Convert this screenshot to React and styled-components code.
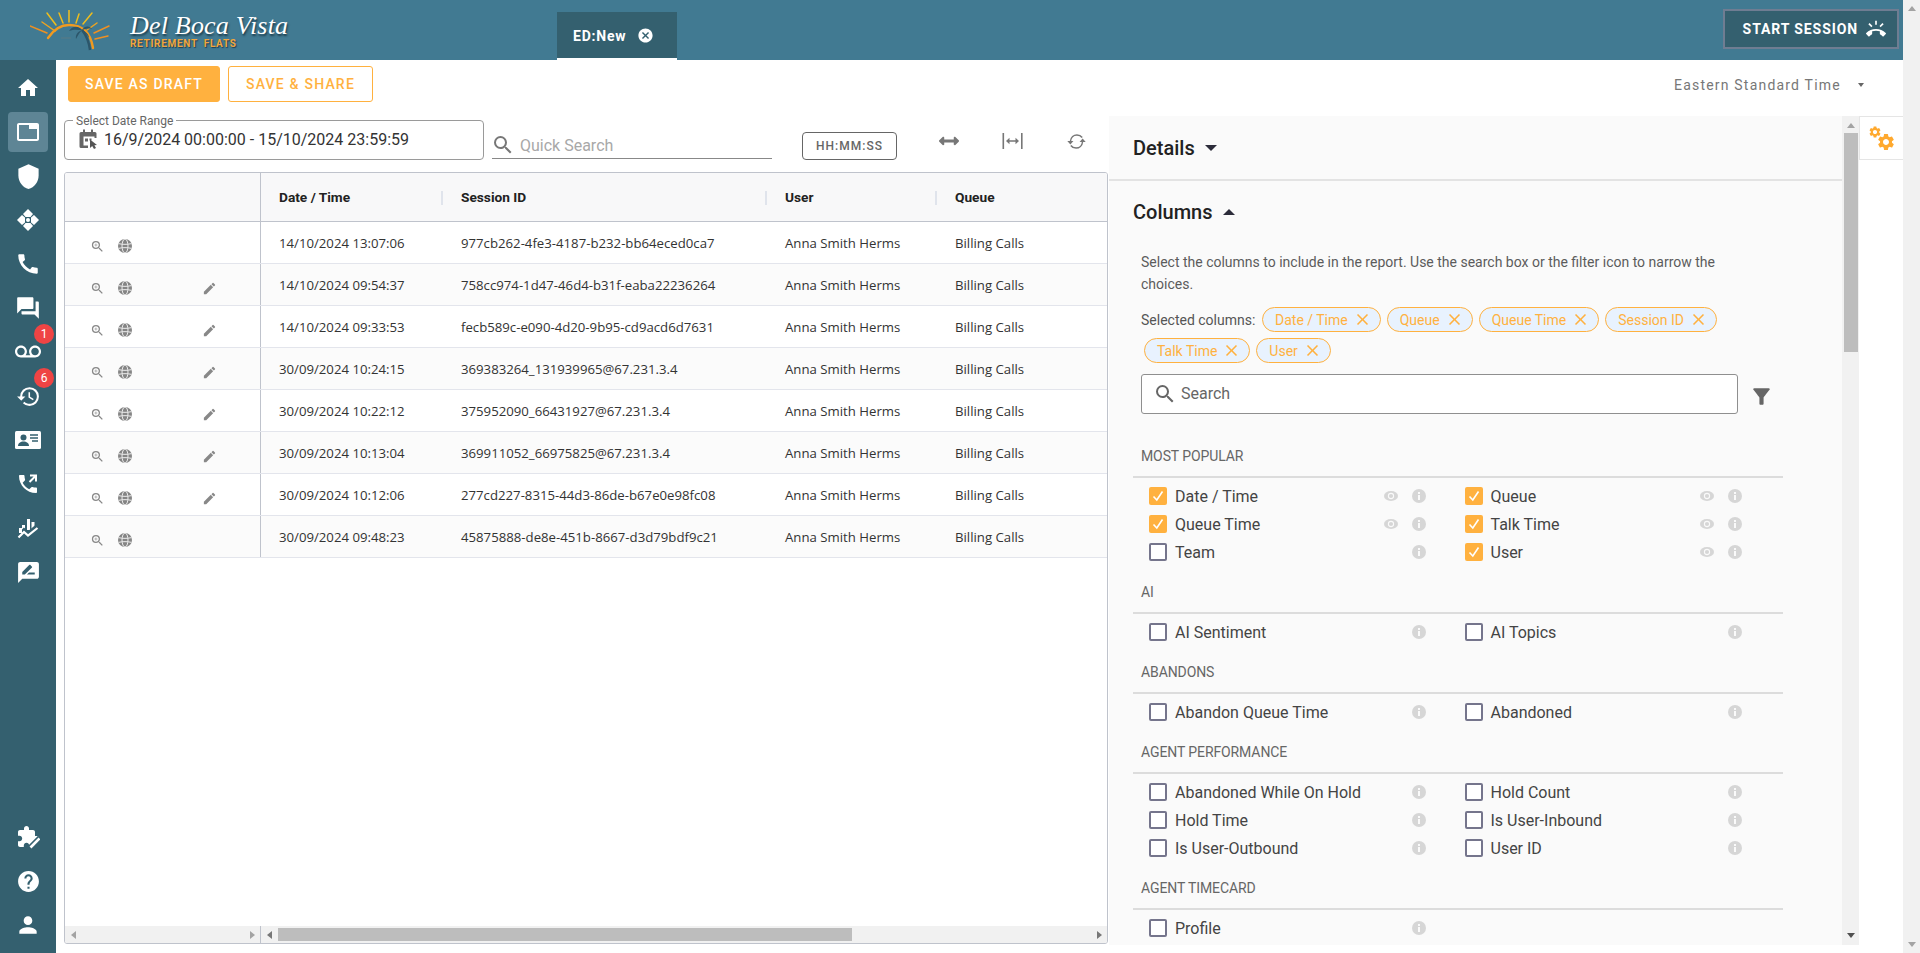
import React from 'react';
import styled, { createGlobalStyle } from 'styled-components';
import {
  MdHome, MdTab, MdShield, MdCall, MdForum, MdVoicemail, MdRestore, MdRateReview, MdHelp, MdPerson,
  MdZoomIn, MdEdit, MdSearch, MdFilterAlt, MdCancel, MdRingVolume, MdClose, MdSettings,
} from 'react-icons/md';
import { FaArrowsAltH } from 'react-icons/fa';

const Global = createGlobalStyle`
  html, body { margin: 0; padding: 0; height: 100%; overflow: hidden; background: #fff; }
  * { box-sizing: border-box; }
  body { font-family: Roboto, "Liberation Sans", sans-serif; color: #333; }
`;

const Page = styled.div`display: flex; width: 1920px; height: 953px; overflow: hidden;`;
const Main = styled.div`width: 1903px; display: flex; flex-direction: column;`;
const PageBar = styled.div`
  width: 17px; background: #f1f1f1; display: flex; flex-direction: column; align-items: center;
  justify-content: space-between; padding: 6px 0 6px;
`;
const Arrow = styled.span`
  display: block; width: 0; height: 0; flex: none;
  ${p => p.$dir === 'up' && `border-left:4px solid transparent;border-right:4px solid transparent;border-bottom:5px solid ${p.$c};`}
  ${p => p.$dir === 'down' && `border-left:4px solid transparent;border-right:4px solid transparent;border-top:5px solid ${p.$c};`}
  ${p => p.$dir === 'left' && `border-top:4px solid transparent;border-bottom:4px solid transparent;border-right:5px solid ${p.$c};`}
  ${p => p.$dir === 'right' && `border-top:4px solid transparent;border-bottom:4px solid transparent;border-left:5px solid ${p.$c};`}
`;

/* header */
const Header = styled.header`
  height: 60px; flex: none; background: #417a92; display: flex; align-items: flex-start; position: relative;
`;
const Logo = styled.div`display: flex; width: 557px; height: 60px; padding: 10px 0 0 30px;`;
const LogoText = styled.div`margin-left: 18px; display: flex; flex-direction: column;`;
const LogoScript = styled.div`
  font-family: "Liberation Serif", serif; font-style: italic; font-size: 26px; line-height: 28px; margin-top: 2px;
  color: #fff; letter-spacing: .2px; text-shadow: 1px 2px 2px #1d3d4c; white-space: nowrap; font-weight: 400;
`;
const LogoSub = styled.div`
  font-family: Roboto, sans-serif; font-size: 10px; line-height: 10px; font-weight: 700;
  color: #f0a63e; letter-spacing: .7px; word-spacing: 3px; text-shadow: 1px 1px 1px #1d3d4c; white-space: nowrap; margin-top: -1px;
`;
const Tab = styled.div`
  margin-top: 12px; width: 120px; height: 48px; background: #34606f; border-bottom: 2px solid #fff;
  display: flex; align-items: center; padding: 1px 0 0 16px; gap: 11px; color: #fff;
  font-weight: 700; font-size: 14px; letter-spacing: .8px;
`;
const StartBtn = styled.button`
  margin: 9px 4px 0 auto; width: 176px; height: 40px; background: #34606f; border: 2px solid #6f7d92;
  color: #fff; font: 700 14px Roboto, sans-serif; letter-spacing: .9px; display: flex; align-items: center;
  justify-content: flex-end; gap: 8px; padding: 0 11px 0 0;
`;

const Body = styled.div`flex: 1; display: flex; min-height: 0;`;

/* sidebar */
const Sidebar = styled.nav`
  width: 56px; flex: none; background: #34606f; display: flex; flex-direction: column; align-items: center; padding: 6px 0;
`;
const NavItem = styled.div`
  width: 40px; height: 40px; margin: 2px 0; border-radius: 4px; display: flex; align-items: center; justify-content: center;
  color: #fff; position: relative; background: ${p => (p.$active ? '#5e8595' : 'transparent')};
`;
const NavBottom = styled.div`margin-top: auto; display: flex; flex-direction: column;`;
const Badge = styled.span`
  position: absolute; top: -8px; left: 26px; width: 20px; height: 20px; border-radius: 50%; background: #ef4444;
  color: #fff; font-size: 12px; display: flex; align-items: center; justify-content: center;
`;

/* content */
const Content = styled.div`flex: 1; display: flex; flex-direction: column; min-width: 0;`;
const ActionBar = styled.div`height: 56px; flex: none; display: flex; align-items: flex-start; padding: 6px 0 0 12px; gap: 8px;`;
const Btn = styled.button`
  height: 36px; border-radius: 3px; border: 1px solid #ffb13f; font: 500 14px Roboto, sans-serif; letter-spacing: 1.2px;
  width: ${p => p.$w}px; padding: 0; color: ${p => (p.$solid ? '#fff' : '#ffb13f')}; background: ${p => (p.$solid ? '#ffb13f' : '#fff')};
`;
const TimeZone = styled.div`
  margin-left: auto; display: flex; align-items: center; height: 36px; padding-top: 1px; font-size: 14px; letter-spacing: 1.2px; color: #777; width: 229px;
`;
const SmallCaret = styled.span`
  margin-left: 17px; width: 0; height: 0; border-left: 3.5px solid transparent; border-right: 3.5px solid transparent; border-top: 4px solid #666;
`;
const Workspace = styled.div`height: 829px; flex: none; display: flex;`;
const LeftPane = styled.div`width: 1053px; flex: none; padding: 4px 0 0 8px; display: flex; flex-direction: column;`;
const Toolbar = styled.div`height: 52px; flex: none; display: flex; align-items: flex-start;`;
const DateField = styled.div`
  width: 420px; height: 40px; border: 1px solid #9a9a9a; border-radius: 4px; display: flex; align-items: center;
  padding: 0 0 2px 14px; gap: 5px; position: relative; font-size: 16px; color: #333;
`;
const FieldLabel = styled.span`
  position: absolute; left: 8px; top: -7px; background: #fff; padding: 0 3px; font-size: 12px; line-height: 14px; color: #666;
`;
const QuickSearch = styled.div`
  margin: 12px 0 0 8px; width: 280px; height: 27px; border-bottom: 1px solid #888; display: flex; align-items: center;
  gap: 5px; font-size: 16px; color: #a8a8a8;
  svg { margin-left: -1px; }
`;
const FormatBtn = styled.button`
  margin: 12px 0 0 30px; width: 95px; height: 28px; border: 1px solid #666; border-radius: 4px; background: #fff;
  font: 500 12px Roboto, sans-serif; letter-spacing: 1px; color: #666; padding: 0;
`;
const ToolIcons = styled.div`margin: 11px 0 0 41px; display: flex; gap: 43px; align-items: center; height: 20px; color: #777;`;
const ToolIcon = styled.span`width: 21px; display: flex; justify-content: center; align-items: center;`;

/* grid */
const Grid = styled.div`
  width: 1044px; height: 772px; border: 1px solid #bfc3cc; border-radius: 3px; display: flex; flex-direction: column; overflow: hidden;
  font-family: "Open Sans", sans-serif; font-size: 13.2px; color: #333;
`;
const Cols = '195px 1px 182px 324px 170px 171px';
const GridHead = styled.div`
  height: 49px; flex: none; background: #f8f8f9; border-bottom: 1px solid #bfc3cc; display: grid; grid-template-columns: ${Cols}; align-items: center;
  font-family: Roboto, sans-serif; font-weight: 700; color: #222;
`;
const HeadCell = styled.div`
  height: 100%; display: flex; align-items: center; padding-left: 18px; position: relative; font-size: 13.7px;
  &::after {
    content: ''; display: ${p => (p.$sep ? 'block' : 'none')}; position: absolute; right: 0; top: 18px; width: 2px; height: 14px; background: #e0e4ec;
  }
`;
const VDivider = styled.div`background: #bfc3cc; height: 100%;`;
const GridBody = styled.div`flex: 1; min-height: 0;`;
const Row = styled.div`
  height: 42px; display: grid; grid-template-columns: ${Cols}; align-items: center; border-bottom: 1px solid #e3e5ec;
  background: ${p => (p.$alt ? '#fbfbfb' : '#fff')};
`;
const ActionCell = styled.div`
  height: 100%; display: flex; padding: 7px 0 0 25px; align-items: center; color: #888;
`;
const ActionSlot = styled.span`display: flex; width: ${p => p.$w}px; flex: none;`;
const Cell = styled.div`padding: 0 0 0 18px; white-space: nowrap; overflow: hidden; line-height: 18px;`;
const HBar = styled.div`height: 17px; flex: none; display: grid; grid-template-columns: 195px 1px 1fr; background: #f1f1f1;`;
const HSeg = styled.div`display: flex; align-items: center; padding: 0 5px 0 6px; justify-content: space-between; position: relative;`;
const HThumb = styled.span`position: absolute; left: 17px; top: 2px; width: 574px; height: 13px; background: #bdbdbd;`;

/* panel */
const Panel = styled.div`width: 733px; flex: none; background: #fafafa; overflow: hidden;`;
const SectionHead = styled.div`
  height: ${p => p.$h}px; display: flex; align-items: center; padding-left: 24px; font-size: 20px; font-weight: 500; color: #222; gap: 10px;
  border-bottom: ${p => (p.$line ? '2px solid #e3e3e3' : '0')};
`;
const Caret = styled.span`
  width: 0; height: 0; border-left: 6px solid transparent; border-right: 6px solid transparent;
  ${p => (p.$up ? 'border-bottom: 6px solid #2c2c3a; margin-left: 1px;' : 'border-top: 6px solid #2c2c3a;')}
`;
const Desc = styled.p`margin: 8px 0 0 32px; width: 610px; font-size: 14px; line-height: 22px; color: #5c5c5c;`;
const ChipWrap = styled.div`
  margin: 12px 0 0 32px; width: 680px; display: flex; flex-wrap: wrap; row-gap: 6px; align-items: center;
`;
const ChipLabel = styled.span`width: 118px; font-size: 14px; color: #555; white-space: nowrap;`;
const Chip = styled.span`
  height: 25px; margin: 0 3px; padding: 0 8px 0 12px; border: 1px solid #ffb13f; border-radius: 13px; background: #e8f2fe; color: #ffb13f;
  font-size: 14px; display: flex; align-items: center; gap: 5px; white-space: nowrap;
`;
const SearchRow = styled.div`margin: 11px 0 0 32px; display: flex; align-items: center; height: 40px;`;
const SearchBox = styled.div`
  width: 597px; height: 40px; border: 1px solid #8f8f8f; border-radius: 3px; background: #fff; display: flex; align-items: center;
  padding: 0 0 1px 11px; gap: 4px; color: #666; font-size: 16px;
`;
const FilterWrap = styled.span`margin: 4px 0 0 11px; display: flex; color: #666;`;
const Categories = styled.div`margin: 32px 0 0 24px; width: 650px;`;
const Category = styled.section`margin-bottom: 16px;`;
const CatHead = styled.div`
  height: 32px; border-bottom: 2px solid #dcdcdc; padding-left: 8px; font-size: 14px; line-height: 20px; color: #666; letter-spacing: -.1px;
`;
const CatItems = styled.div`padding: 4px 0 0 16px; display: grid; grid-template-columns: 315.5px 315.5px; grid-auto-rows: 28px;`;
const Item = styled.div`display: grid; grid-template-columns: 26px 209px 28px 28px; align-items: center; font-size: 16px; color: #444;`;
const Check = styled.span`
  width: 18px; height: 18px; border-radius: 2px; display: flex; align-items: center; justify-content: center;
  ${p => (p.$on ? 'background: #ffb13f;' : 'background: #fff; border: 2px solid #75758c;')}
`;
const ItemLabel = styled.span`white-space: nowrap;`;
const Dot = styled.span`display: flex; grid-column: ${p => p.$col};`;
const VBar = styled.div`
  width: 17px; flex: none; background: #f1f1f1; display: flex; flex-direction: column; align-items: center; padding: 7px 0 7px;
`;
const VThumb = styled.div`width: 14px; height: 219px; background: #bdbdbd; margin-top: 5px;`;
const VSpacer = styled.div`flex: 1;`;
const SideTabs = styled.div`width: 44px; flex: none;`;
const SideTab = styled.div`
  width: 44px; height: 44px; background: #fff; border: 1px solid #e5e5e5; border-right: 0; display: flex; align-items: center; justify-content: center;
`;

/* drawings */
const SunLogo = () => (
  <svg width="82" height="42" viewBox="0 0 82 42" style={{ flex: 'none' }}>
    <g stroke="#ee9022" strokeWidth="1.5" strokeLinecap="round" fill="none">
      <path d="M17 3L26 15" stroke="#eebd1d" />
      <path d="M29 3L33 13" stroke="#eebd1d" />
      <path d="M39 0V12" stroke="#f3c01c" />
      <path d="M49 4L46 13" stroke="#eebd1d" />
      <path d="M62 3L53 14" stroke="#eebd1d" />
      <path d="M0 16L17 23" />
      <path d="M12 12L25 21" stroke="#efa420" />
      <path d="M67 13L57 20" stroke="#efa420" />
      <path d="M79 16L64 23" />
      <path d="M78 26L65 29" />
      <path d="M18 28C24 19 31 15 39 15C50 15 60 19 63 38" strokeWidth="2.4" stroke="#f09a20" />
    </g>
    <path d="M60 40C59 32 56 25 52 20" stroke="#2c566a" strokeWidth="2.4" fill="none" />
    <path d="M52 20C48 15 42 16 39 21C44 19 48 20 52 20ZM52 20C55 15 60 16 62 19C58 18 55 19 52 20ZM52 20C49 21 45 24 46 29C48 25 50 22 52 20ZM52 20C55 21 59 24 59 28C57 25 55 22 52 20Z" fill="#2c566a" />
    <path d="M31 28h10" stroke="#5b7a85" strokeWidth="1" />
  </svg>
);
const Diamond = () => (
  <svg width="24" height="24" viewBox="0 0 24 24" fill="#fff">
    <path d="M12 1L17 6L14.5 9H9.5L7 6Z" />
    <path d="M12 23L17 18L14.5 15H9.5L7 18Z" />
    <path d="M1 12L6 7L9 9.5V14.5L6 17Z" />
    <path d="M23 12L18 7L15 9.5V14.5L18 17Z" />
    <circle cx="12" cy="12" r="2" />
  </svg>
);
const ContactCard = () => (
  <svg width="26" height="18" viewBox="0 0 26 18">
    <rect width="26" height="18" rx="1.5" fill="#fff" />
    <circle cx="8.5" cy="6.5" r="3" fill="#34606f" />
    <path d="M3 15c0-3 2.5-4.5 5.5-4.5S14 12 14 15z" fill="#34606f" />
    <path d="M15 4h8M15 7h8M17 10h6" stroke="#34606f" strokeWidth="1.3" />
  </svg>
);
const CallOut = () => (
  <svg width="24" height="24" viewBox="0 0 24 24" fill="#fff">
    <path d="M20 15.5c-1.25 0-2.45-.2-3.57-.57-.35-.11-.74-.03-1.02.24l-2.2 2.2c-2.83-1.44-5.15-3.75-6.59-6.59l2.2-2.21c.28-.26.36-.65.25-1C8.7 6.45 8.5 5.25 8.5 4c0-.55-.45-1-1-1H4c-.55 0-1 .45-1 1 0 9.39 7.61 17 17 17 .55 0 1-.45 1-1v-3.5c0-.55-.45-1-1-1z" />
    <path d="M14 2.5v2h3.6l-4.8 4.8 1.4 1.4L19 5.9v3.6h2v-7z" />
  </svg>
);
const ChartIcon = () => (
  <svg width="24" height="24" viewBox="0 0 24 24" fill="#fff">
    <rect x="6" y="9" width="3" height="7" />
    <rect x="11" y="3" width="3" height="11" />
    <rect x="15.5" y="6" width="3" height="8" />
    <path d="M2 21L8 15L12 18.5L21 11" fill="none" stroke="#34606f" strokeWidth="5" />
    <path d="M2.5 21.5L8 16L12 19.5L21.5 12" fill="none" stroke="#fff" strokeWidth="2.2" />
    <rect x="3" y="12" width="3" height="5" />
  </svg>
);
const PuzzlePen = () => (
  <svg width="24" height="24" viewBox="0 0 24 24" fill="#fff">
    <path d="M20.5 11H19V7c0-1.1-.9-2-2-2h-4V3.5C13 2.12 11.88 1 10.5 1S8 2.12 8 3.5V5H4c-1.1 0-1.99.9-1.99 2v3.8H3.5c1.49 0 2.7 1.21 2.7 2.7s-1.21 2.7-2.7 2.7H2V20c0 1.1.9 2 2 2h3.8v-1.5c0-1.49 1.21-2.7 2.7-2.7 1.49 0 2.7 1.21 2.7 2.7V22H17c1.1 0 2-.9 2-2v-4h1.5c1.38 0 2.5-1.12 2.5-2.5S21.88 11 20.5 11z" />
    <path d="M13 24L24 13" stroke="#34606f" strokeWidth="6" />
    <path d="M14.5 22.5L23.5 13.5" stroke="#fff" strokeWidth="2.6" />
  </svg>
);
const Globe = () => (
  <svg width="14" height="14" viewBox="0 0 14 14" fill="none" stroke="#eee" strokeWidth="1">
    <circle cx="7" cy="7" r="7" fill="#858585" stroke="none" />
    <ellipse cx="7" cy="7" rx="3" ry="7" />
    <path d="M.5 4.6C4 5.6 10 5.6 13.5 4.6M.5 9.4C4 8.4 10 8.4 13.5 9.4" />
  </svg>
);
const CalendarCursor = () => (
  <svg width="20" height="20" viewBox="0 0 20 20">
    <path d="M2 3h14a1.5 1.5 0 0 1 1.5 1.5V9h-2V7.5h-11v9H9V19H2a1.5 1.5 0 0 1-1.5-1.5v-13A1.5 1.5 0 0 1 2 3z" fill="#666" />
    <rect x="4" y="0.5" width="2" height="4" fill="#666" />
    <rect x="12" y="0.5" width="2" height="4" fill="#666" />
    <rect x="6" y="9.5" width="3" height="3" fill="#666" />
    <rect x="10.5" y="9.5" width="2" height="2" fill="#666" />
    <path d="M11 10.5L11 19L13.2 17L15 20L17 19L15.4 16.2L18 16Z" fill="#555" />
  </svg>
);
const FitWidth = () => (
  <svg width="21" height="16" viewBox="0 0 21 16" fill="#777">
    <rect x="0.5" width="1.6" height="16" />
    <rect x="19" width="1.6" height="16" />
    <path d="M4 8L7.5 4.8V7.2H13.5V4.8L17 8L13.5 11.2V8.8H7.5V11.2Z" />
  </svg>
);
const SyncIcon = () => (
  <svg width="25" height="21" viewBox="0 0 24 20" fill="none" stroke="#777" strokeWidth="1.7">
    <path d="M5 10C5.5 5 9 2.5 12.5 2.5C15 2.5 17 3.5 18.5 5.5" />
    <path d="M19 10C18.5 15 15 17.5 11.5 17.5C9 17.5 7 16.5 5.5 14.5" />
    <path d="M1.5 9.5H8.5L5 13.5Z" fill="#777" stroke="none" />
    <path d="M15.5 10.5H22.5L19 6.5Z" fill="#777" stroke="none" />
  </svg>
);
const Gears = () => (
  <svg width="28" height="28" viewBox="0 0 28 28" color="#ffa92e" style={{ marginTop: 2 }}>
    <MdSettings x={0} y={0} size={14} />
    <MdSettings x={8} y={7} size={20} />
  </svg>
);
const Tick = () => (
  <svg width="12" height="12" viewBox="0 0 12 12" fill="none" stroke="#fff" strokeWidth="1.6"><path d="M1.5 6.5L4.8 10L10.5 1.5" /></svg>
);
const EyeDot = () => (
  <svg width="14" height="14" viewBox="0 0 14 14">
    <ellipse cx="7" cy="7" rx="7" ry="5" fill="#d6d6d6" />
    <circle cx="7" cy="7" r="2.6" fill="none" stroke="#fafafa" strokeWidth="1.1" />
  </svg>
);
const InfoDot = () => (
  <svg width="14" height="14" viewBox="0 0 14 14">
    <circle cx="7" cy="7" r="7" fill="#d6d6d6" />
    <rect x="6" y="6" width="2" height="5" fill="#fafafa" />
    <rect x="6" y="3" width="2" height="2" fill="#fafafa" />
  </svg>
);

/* data */
const rows = [
  ['14/10/2024 13:07:06', '977cb262-4fe3-4187-b232-bb64eced0ca7', false],
  ['14/10/2024 09:54:37', '758cc974-1d47-46d4-b31f-eaba22236264', true],
  ['14/10/2024 09:33:53', 'fecb589c-e090-4d20-9b95-cd9acd6d7631', true],
  ['30/09/2024 10:24:15', '369383264_131939965@67.231.3.4', true],
  ['30/09/2024 10:22:12', '375952090_66431927@67.231.3.4', true],
  ['30/09/2024 10:13:04', '369911052_66975825@67.231.3.4', true],
  ['30/09/2024 10:12:06', '277cd227-8315-44d3-86de-b67e0e98fc08', true],
  ['30/09/2024 09:48:23', '45875888-de8e-451b-8667-d3d79bdf9c21', false],
];
const chips = ['Date / Time', 'Queue', 'Queue Time', 'Session ID', 'Talk Time', 'User'];
const categories = [
  ['MOST POPULAR', [['Date / Time', 1], ['Queue', 1], ['Queue Time', 1], ['Talk Time', 1], ['Team', 0], ['User', 1]]],
  ['AI', [['AI Sentiment', 0], ['AI Topics', 0]]],
  ['ABANDONS', [['Abandon Queue Time', 0], ['Abandoned', 0]]],
  ['AGENT PERFORMANCE', [['Abandoned While On Hold', 0], ['Hold Count', 0], ['Hold Time', 0], ['Is User-Inbound', 0], ['Is User-Outbound', 0], ['User ID', 0]]],
  ['AGENT TIMECARD', [['Profile', 0]]],
];

export default function App() {
  return (
    <Page>
      <Global />
      <Main>
        <Header>
          <Logo>
            <SunLogo />
            <LogoText>
              <LogoScript>Del Boca Vista</LogoScript>
              <LogoSub>RETIREMENT FLATS</LogoSub>
            </LogoText>
          </Logo>
          <Tab>ED:New <MdCancel size={17} /></Tab>
          <StartBtn>START SESSION <MdRingVolume size={20} /></StartBtn>
        </Header>
        <Body>
          <Sidebar>
            <NavItem><MdHome size={24} /></NavItem>
            <NavItem $active><MdTab size={24} /></NavItem>
            <NavItem><MdShield size={27} /></NavItem>
            <NavItem><Diamond /></NavItem>
            <NavItem><MdCall size={26} /></NavItem>
            <NavItem><MdForum size={26} /></NavItem>
            <NavItem><MdVoicemail size={26} /><Badge>1</Badge></NavItem>
            <NavItem><MdRestore size={25} /><Badge>6</Badge></NavItem>
            <NavItem><ContactCard /></NavItem>
            <NavItem><CallOut /></NavItem>
            <NavItem><ChartIcon /></NavItem>
            <NavItem><MdRateReview size={25} /></NavItem>
            <NavBottom>
              <NavItem><PuzzlePen /></NavItem>
              <NavItem><MdHelp size={25} /></NavItem>
              <NavItem><MdPerson size={26} /></NavItem>
            </NavBottom>
          </Sidebar>
          <Content>
            <ActionBar>
              <Btn $solid $w={152}>SAVE AS DRAFT</Btn>
              <Btn $w={145}>SAVE &amp; SHARE</Btn>
              <TimeZone>Eastern Standard Time<SmallCaret /></TimeZone>
            </ActionBar>
            <Workspace>
              <LeftPane>
                <Toolbar>
                  <DateField>
                    <FieldLabel>Select Date Range</FieldLabel>
                    <CalendarCursor />
                    16/9/2024 00:00:00 - 15/10/2024 23:59:59
                  </DateField>
                  <QuickSearch><MdSearch size={24} color="#777" />Quick Search</QuickSearch>
                  <FormatBtn>HH:MM:SS</FormatBtn>
                  <ToolIcons>
                    <ToolIcon><FaArrowsAltH size={20} /></ToolIcon>
                    <ToolIcon><FitWidth /></ToolIcon>
                    <ToolIcon><SyncIcon /></ToolIcon>
                  </ToolIcons>
                </Toolbar>
                <Grid>
                  <GridHead>
                    <HeadCell />
                    <VDivider />
                    <HeadCell $sep>Date / Time</HeadCell>
                    <HeadCell $sep>Session ID</HeadCell>
                    <HeadCell $sep>User</HeadCell>
                    <HeadCell>Queue</HeadCell>
                  </GridHead>
                  <GridBody>
                    {rows.map(([d, s, pen], i) => (
                      <Row key={s} $alt={i % 2 === 1}>
                        <ActionCell>
                          <ActionSlot $w={28}><MdZoomIn size={15} /></ActionSlot>
                          <ActionSlot $w={84}><Globe /></ActionSlot>
                          <ActionSlot $w={15}>{pen && <MdEdit size={15} />}</ActionSlot>
                        </ActionCell>
                        <VDivider />
                        <Cell>{d}</Cell>
                        <Cell>{s}</Cell>
                        <Cell>Anna Smith Herms</Cell>
                        <Cell>Billing Calls</Cell>
                      </Row>
                    ))}
                  </GridBody>
                  <HBar>
                    <HSeg><Arrow $dir="left" $c="#a3a3a3" /><Arrow $dir="right" $c="#a3a3a3" /></HSeg>
                    <VDivider />
                    <HSeg><Arrow $dir="left" $c="#777" /><HThumb /><Arrow $dir="right" $c="#777" /></HSeg>
                  </HBar>
                </Grid>
              </LeftPane>
              <Panel>
                <SectionHead $h={65} $line>Details <Caret /></SectionHead>
                <SectionHead $h={62}>Columns <Caret $up /></SectionHead>
                <Desc>Select the columns to include in the report. Use the search box or the filter icon to narrow the choices.</Desc>
                <ChipWrap>
                  <ChipLabel>Selected columns:</ChipLabel>
                  {chips.map(c => <Chip key={c}>{c}<MdClose size={19} /></Chip>)}
                </ChipWrap>
                <SearchRow>
                  <SearchBox><MdSearch size={24} />Search</SearchBox>
                  <FilterWrap><MdFilterAlt size={25} /></FilterWrap>
                </SearchRow>
                <Categories>
                  {categories.map(([name, items]) => (
                    <Category key={name}>
                      <CatHead>{name}</CatHead>
                      <CatItems>
                        {items.map(([label, on]) => (
                          <Item key={label}>
                            <Check $on={!!on}>{on ? <Tick /> : null}</Check>
                            <ItemLabel>{label}</ItemLabel>
                            {on ? <Dot $col={3}><EyeDot /></Dot> : null}
                            <Dot $col={4}><InfoDot /></Dot>
                          </Item>
                        ))}
                      </CatItems>
                    </Category>
                  ))}
                </Categories>
              </Panel>
              <VBar>
                <Arrow $dir="up" $c="#a3a3a3" />
                <VThumb />
                <VSpacer />
                <Arrow $dir="down" $c="#505050" />
              </VBar>
              <SideTabs><SideTab><Gears /></SideTab></SideTabs>
            </Workspace>
          </Content>
        </Body>
      </Main>
      <PageBar>
        <Arrow $dir="up" $c="#a3a3a3" />
        <Arrow $dir="down" $c="#a3a3a3" />
      </PageBar>
    </Page>
  );
}
